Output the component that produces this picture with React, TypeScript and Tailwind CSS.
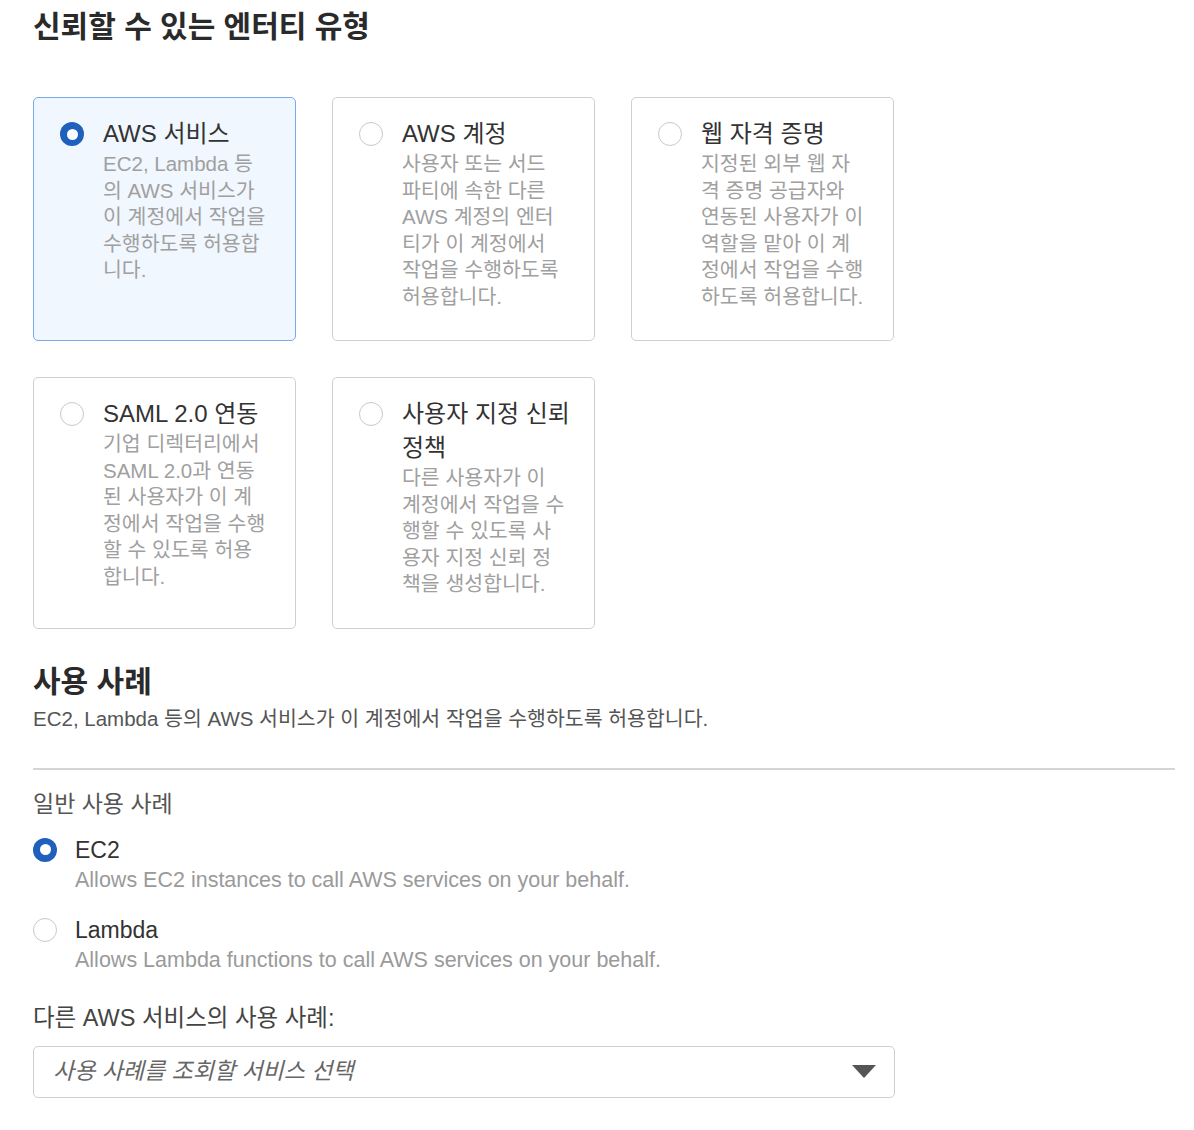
import { useState } from "react";

const font = {
  fontFamily: '"Liberation Sans", "Noto Sans CJK KR", sans-serif',
};

interface EntityType {
  id: string;
  title: string[];
  lines: string[];
}

const entityTypes: EntityType[] = [
  {
    id: "service",
    title: ["AWS 서비스"],
    lines: ["EC2, Lambda 등", "의 AWS 서비스가", "이 계정에서 작업을", "수행하도록 허용합", "니다."],
  },
  {
    id: "account",
    title: ["AWS 계정"],
    lines: ["사용자 또는 서드", "파티에 속한 다른", "AWS 계정의 엔터", "티가 이 계정에서", "작업을 수행하도록", "허용합니다."],
  },
  {
    id: "web",
    title: ["웹 자격 증명"],
    lines: ["지정된 외부 웹 자", "격 증명 공급자와", "연동된 사용자가 이", "역할을 맡아 이 계", "정에서 작업을 수행", "하도록 허용합니다."],
  },
  {
    id: "saml",
    title: ["SAML 2.0 연동"],
    lines: ["기업 디렉터리에서", "SAML 2.0과 연동", "된 사용자가 이 계", "정에서 작업을 수행", "할 수 있도록 허용", "합니다."],
  },
  {
    id: "custom",
    title: ["사용자 지정 신뢰", "정책"],
    lines: ["다른 사용자가 이", "계정에서 작업을 수", "행할 수 있도록 사", "용자 지정 신뢰 정", "책을 생성합니다."],
  },
];

const useCases = [
  { id: "ec2", label: "EC2", desc: "Allows EC2 instances to call AWS services on your behalf." },
  { id: "lambda", label: "Lambda", desc: "Allows Lambda functions to call AWS services on your behalf." },
];

function Radio({ checked }: { checked: boolean }) {
  return checked ? (
    <span className="flex h-6 w-6 shrink-0 items-center justify-center rounded-full bg-[#1f60bd]">
      <span className="block h-[11px] w-[11px] rounded-full bg-white" />
    </span>
  ) : (
    <span className="block h-6 w-6 shrink-0 rounded-full border-[1.5px] border-[#c9c9c9] bg-white" />
  );
}

export default function App() {
  const [entity, setEntity] = useState("service");
  const [useCase, setUseCase] = useState("ec2");

  return (
    <div className="min-h-screen bg-white pl-[33px] pr-[19px] text-[#333]" style={font}>
      {/* Trusted entity type */}
      <h1 className="mt-[9px] text-[30px] font-bold leading-[36px] text-[#2a2a2a]">
        신뢰할 수 있는 엔터티 유형
      </h1>

      <div className="mt-[52px] grid grid-cols-[263px_263px_263px] gap-x-9 gap-y-[36px]">
        {entityTypes.map((item) => {
          const active = entity === item.id;
          return (
            <button
              key={item.id}
              onClick={() => setEntity(item.id)}
              className={`flex items-start gap-[19px] rounded-[5px] border pb-[30px] pl-[26px] pr-2 pt-[19px] text-left ${
                active ? "border-[#7ba8e8] bg-[#f1f7fe]" : "border-[#cfcfcf] bg-white"
              }`}
            >
              <span className="mt-[5px] block">
                <Radio checked={active} />
              </span>
              <span className="flex flex-col">
                <span className="text-[24px] leading-[34px] text-[#333]">
                  {item.title.map((t, i) => (
                    <span key={i} className="block whitespace-nowrap">
                      {t}
                    </span>
                  ))}
                </span>
                <span className="text-[20.5px] leading-[26.5px] text-[#a0a0a0]">
                  {item.lines.map((line, i) => (
                    <span key={i} className="block whitespace-nowrap">
                      {line}
                    </span>
                  ))}
                </span>
              </span>
            </button>
          );
        })}
      </div>

      {/* Use case */}
      <h2 className="mt-[35px] text-[30px] font-bold leading-[36px] text-[#2a2a2a]">사용 사례</h2>
      <p className="mt-[6px] text-[20.5px] leading-[26px] text-[#555]">
        EC2, Lambda 등의 AWS 서비스가 이 계정에서 작업을 수행하도록 허용합니다.
      </p>

      <div className="mt-[36px] h-[2px] bg-[#d5d5d5]" />

      <p className="mt-[20px] text-[23px] leading-[28px] text-[#555]">일반 사용 사례</p>

      <div className="mt-[17px] flex flex-col gap-[22px]">
        {useCases.map((uc) => (
          <button
            key={uc.id}
            onClick={() => setUseCase(uc.id)}
            className="flex items-start gap-[18px] text-left"
          >
            <span className="mt-[3px] block">
              <Radio checked={useCase === uc.id} />
            </span>
            <span className="flex flex-col gap-[2px]">
              <span className="text-[23px] leading-[30px] text-[#333]">{uc.label}</span>
              <span className="text-[21.5px] leading-[26px] text-[#9a9a9a]">{uc.desc}</span>
            </span>
          </button>
        ))}
      </div>

      <p className="mt-[31px] text-[23.5px] leading-[28px] text-[#444]">다른 AWS 서비스의 사용 사례:</p>

      <div className="mt-[14px] flex h-[52px] w-[862px] items-center justify-between rounded-[5px] border border-[#cfcfcf] bg-white pl-[19px] pr-[18px]">
        <span className="text-[23px] italic text-[#666]">사용 사례를 조회할 서비스 선택</span>
        <svg width="24" height="14" viewBox="0 0 24 14" className="mt-[1px]">
          <path d="M0 0 H24 L12 13 Z" fill="#555" />
        </svg>
      </div>
    </div>
  );
}
